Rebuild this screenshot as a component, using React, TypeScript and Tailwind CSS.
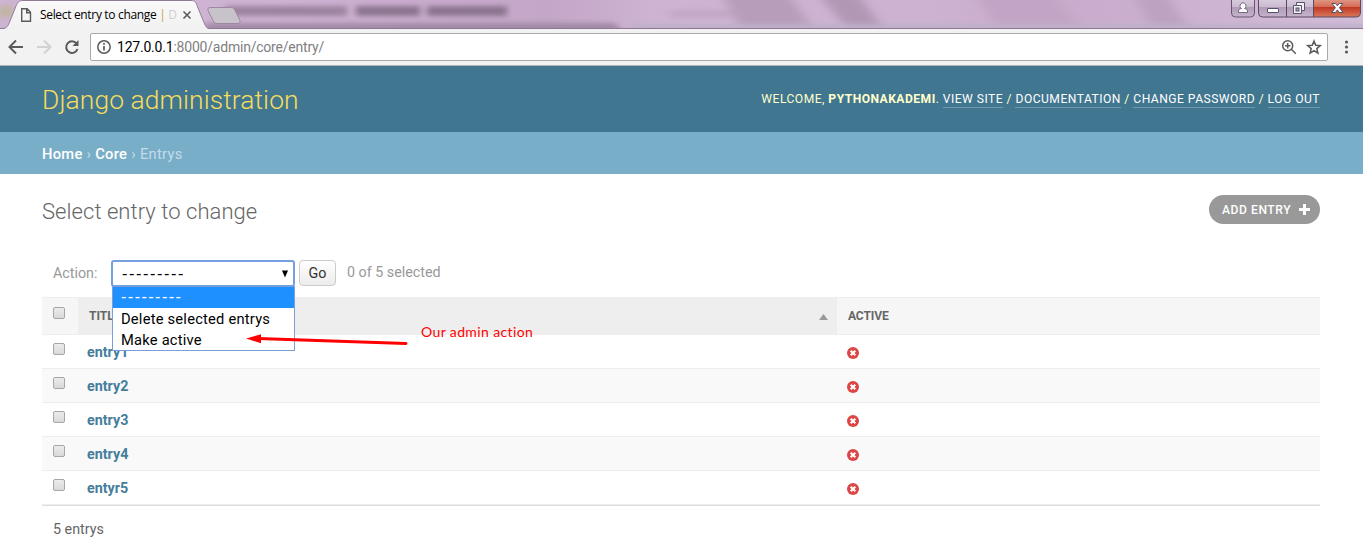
import React from "react";

const entries = ["entry1", "entry2", "entry3", "entry4", "entyr5"];

function TitleBar() {
  return (
    <div className="relative h-[29px] overflow-hidden bg-[#cdb1d1]">
      <svg width="1363" height="29" className="block">
        <defs>
          <linearGradient id="glass" x1="0" x2="1363" y1="0" y2="0" gradientUnits="userSpaceOnUse">
            <stop offset="0" stopColor="#cdb4d2" />
            <stop offset="0.2" stopColor="#cfb3d3" />
            <stop offset="0.4" stopColor="#c4a6c8" />
            <stop offset="0.48" stopColor="#ceb3d2" />
            <stop offset="0.68" stopColor="#ceb2d2" />
            <stop offset="0.78" stopColor="#c9abcd" />
            <stop offset="1" stopColor="#d3bcd8" />
          </linearGradient>
          <linearGradient id="tab" x2="0" y2="1">
            <stop offset="0" stopColor="#fafafa" />
            <stop offset="1" stopColor="#f2f1f2" />
          </linearGradient>
          <linearGradient id="ctl" x2="0" y2="1">
            <stop offset="0" stopColor="#dccfe1" />
            <stop offset="0.48" stopColor="#cbbad0" />
            <stop offset="0.5" stopColor="#b19cb6" />
            <stop offset="1" stopColor="#c7b3cd" />
          </linearGradient>
          <linearGradient id="cls" x2="0" y2="1">
            <stop offset="0" stopColor="#e2a08e" />
            <stop offset="0.48" stopColor="#d46a55" />
            <stop offset="0.5" stopColor="#c13a23" />
            <stop offset="1" stopColor="#d9795c" />
          </linearGradient>
          <filter id="soft" x="-20%" y="-100%" width="140%" height="300%">
            <feGaussianBlur stdDeviation="3 2.5" />
          </filter>
          <filter id="wide" x="-20%" y="-100%" width="140%" height="300%">
            <feGaussianBlur stdDeviation="6 2" />
          </filter>
        </defs>
        <rect width="1363" height="29" fill="url(#glass)" />
        <g filter="url(#wide)">
          <path d="M720-10h65l35 48h-75z" fill="#b79dba" />
          <path d="M815-10h40l35 48h-35z" fill="#b297b5" />
          <path d="M970-10h80l40 48h-85z" fill="#c2a5c6" />
          <path d="M1130-10h32l35 48h-40z" fill="#bda2c2" />
          <path d="M670 10h60v8h-60z" fill="#c3a7c6" />
        </g>
        <g filter="url(#soft)">
          <path d="M0 6h12v11H0z" fill="#c0b59c" />
          <path d="M225 6h122v10H225z" fill="#9c839f" />
          <path d="M356 6h64v10h-64zM427 6h80v10h-80z" fill="#8b748f" />
          <path d="M205 23h410l14 16H205z" fill="#a18aa6" />
          <path d="M629 24h760v15H635z" fill="#beb0ca" />
        </g>
        <path d="M0 28.5H1363" stroke="#8d7794" />
        <path d="M3 29C7 28 8 26 10 21L16 6C18 2 19 .5 23 .5H191c4 0 5 2 6 5l7 17c2 5 3 6 6 6.500z" fill="url(#tab)" />
        <path d="M3 28.500C7 28 8 26 10 21L16 6C18 2 19 .5 23 .5H191c4 0 5 2 6 5l7 17c2 5 3 6 6 6" fill="none" stroke="#917b97" />
        <path d="M210 7.500h22q2 0 3 3l5 10q1 3-2 3h-22q-2 0-3-3l-5-10q-1-3 2-3z" fill="#c8c2ca" stroke="#9e89a4" />
        <path d="M21.700 8.700h5.500l3.300 3.500v9.100h-8.800zM26.700 8.700v4h4" fill="none" stroke="#5a5a5a" strokeWidth="1.400" />
        <path d="M183.500 11.500l7 7m0-7l-7 7" stroke="#5a5a5a" strokeWidth="1.600" />
        <path d="M1231.500-2V13q0 4 4 4h15q4 0 4-4V-2z" fill="url(#ctl)" stroke="#66556c" />
        <path d="M1258.500-2V13q0 4 4 4H1313V-2z" fill="url(#ctl)" />
        <path d="M1313-2V17h43q4 0 4-4V-2z" fill="url(#cls)" />
        <path d="M1258.500-2V13q0 4 4 4h94q4 0 4-4V-2M1286.500 0V17M1313.500 0V17" fill="none" stroke="#5b4b60" />
        <path d="M1238.500 12.500v-1.500q0-2.500 3-2.500a3 3 0 1 1 3 0q3 0 3 2.500v1.500z" fill="#fff" stroke="#74687b" />
        <rect x="1267.500" y="8.500" width="11" height="4" rx="0.500" fill="#fff" stroke="#54536a" />
        <path d="M1296.500 2.500h8v8h-3v3h-8v-8h3z" fill="#f5f3f6" stroke="#54536a" />
        <path d="M1296.500 5.500h5v5" fill="none" stroke="#54536a" />
        <rect x="1296" y="8" width="3" height="3" fill="#b7a4ba" stroke="#54536a" />
        <path d="M1332 3.500h3.500l1.900 2.300 1.900-2.300h3.500l-3.400 4.200 3.600 4.800h-3.700l-1.900-2.600-2 2.600h-3.600l3.600-4.800z" fill="#fff" stroke="#54536a" />
      </svg>
      <div className="absolute left-[40px] top-[6px] whitespace-nowrap font-['Open_Sans',sans-serif] text-[12px] leading-[18px] tracking-[-0.330px] text-black">
        Select entry to change <span className="text-[#c99b4c]">|</span> <span className="text-[#cecece]">D</span>
      </div>
    </div>
  );
}

function Toolbar() {
  return (
    <div className="flex h-[37px] items-center border-b border-[#b3b3b3] bg-[#f2f2f2]">
      <svg width="90" height="36" className="shrink-0" fill="none" stroke="#5a5a5a" strokeWidth="2">
        <path d="M23 18H10M16 11.500L9.500 18l6.500 6.500" />
        <path d="M37 18h13M44 11.500l6.500 6.500-6.500 6.500" stroke="#d2d2d2" />
        <path d="M76.500 14.500A5.800 5.800 0 1 0 77.500 20" />
        <path d="M78.500 11v6h-6z" fill="#5a5a5a" stroke="none" />
      </svg>
      <div className="flex h-7 w-[1238px] items-center rounded-[2px] border border-[#a9a9a9] bg-white">
        <svg width="26" height="26" className="shrink-0" fill="none" stroke="#5a5a5a" strokeWidth="1.500">
          <circle cx="13" cy="13" r="6.200" />
          <path d="M13 12v4.500M13 9v1.700" strokeWidth="1.700" />
        </svg>
        <div className="grow font-['Roboto',sans-serif] text-[14px] leading-[20px] tracking-[-0.210px] text-[#808080]">
          <span className="text-black">127.0.0.1</span>:8000/admin/core/entry/
        </div>
        <svg width="46" height="26" fill="none" stroke="#5a5a5a" strokeWidth="1.500">
          <circle cx="6.700" cy="11.700" r="5" />
          <path d="M10.300 15.300l4.500 4.500M4 11.700h5.400M6.700 9v5.400" />
          <path d="M33 7l1.700 4.200 4.600.400-3.500 3 1.100 4.500-3.900-2.400-3.900 2.400 1.100-4.500-3.500-3 4.600-.400z" strokeWidth="1.500" />
        </svg>
      </div>
      <svg width="34" height="28" className="shrink-0" fill="#5a5a5a">
        <circle cx="18.500" cy="9" r="1.600" />
        <circle cx="18.500" cy="14" r="1.600" />
        <circle cx="18.500" cy="19" r="1.600" />
      </svg>
    </div>
  );
}

function Checkbox() {
  return <div className="h-3 w-3 rounded-[2px] border border-[#a6a6a6] bg-linear-to-b from-[#ececec] to-[#d9d9d9]" />;
}

function FalseIcon() {
  return (
    <svg width="12" height="12" viewBox="0 0 12 12">
      <circle cx="6" cy="6" r="6" fill="#dd4646" />
      <path d="M3.700 3.700l4.600 4.600m0-4.600L3.700 8.300" stroke="#fff" strokeWidth="2.100" />
    </svg>
  );
}

function UserLink({ children }: { children: React.ReactNode }) {
  return <a className="border-b border-[#6f9bb0] pb-px text-white">{children}</a>;
}

function ActionSelect() {
  return (
    <div className="relative ml-[13px] h-[27px] w-[184px]">
      <div className="flex h-[27px] items-center rounded-[3px] border-2 border-[#75a0e0] bg-white pl-[9px] pr-[5px] text-black">
        <span className="grow font-['DejaVu_Sans',sans-serif] text-[15px] leading-[20px] tracking-[1.600px]">---------</span>
        <svg width="6" height="8">
          <path d="M0 0.500h6L3 7.500z" fill="#000" />
        </svg>
      </div>
      <div className="absolute left-px top-[26px] z-10 h-[65px] w-[183px] border border-[#7a9fd6] bg-white text-[14.700px] leading-[22px] tracking-[0.220px] text-black">
        <div className="h-[21px] bg-[#1e90ff] pl-2 font-['DejaVu_Sans',sans-serif] text-[15px] leading-[20px] tracking-[1.400px] text-white">
          ---------
        </div>
        <div className="h-[21px] pl-2">Delete selected entrys</div>
        <div className="h-[21px] pl-2">Make active</div>
      </div>
    </div>
  );
}

export default function App() {
  return (
    <div className="h-[543px] w-[1363px] overflow-hidden bg-white font-['Roboto',sans-serif] text-[14.300px] text-[#666]">
      <TitleBar />
      <Toolbar />
      <header className="flex h-[66px] items-center justify-between bg-[#417690] px-[42px] pr-[43px]">
        <h1 className="pt-[4px] text-[26.400px] font-light tracking-[0.100px] text-[#f5dd5d]">Django administration</h1>
        <div className="whitespace-nowrap text-[12.100px] tracking-[0.475px] text-[#ffc]">
          WELCOME, <b>PYTHONAKADEMI</b>. <UserLink>VIEW SITE</UserLink> / <UserLink>DOCUMENTATION</UserLink> /{" "}
          <UserLink>CHANGE PASSWORD</UserLink> / <UserLink>LOG OUT</UserLink>
        </div>
      </header>
      <nav className="flex h-[42px] items-center bg-[#79aec8] pl-[42px] pt-[3px] text-[14.700px] tracking-[0.300px] text-[#c4dce8]">
        <div>
          <span className="font-medium text-white">Home</span> › <span className="font-medium text-white">Core</span> › Entrys
        </div>
      </nav>
      <main className="relative pl-[42px] pr-[43px]">
        <div className="flex h-[86px] items-start justify-between pt-[21px]">
          <h2 className="pt-[2px] text-[22px] font-light leading-[30px] tracking-[0.060px]">Select entry to change</h2>
          <div className="flex h-[29px] w-[111px] items-center rounded-[15px] bg-[#999] pl-[13px] text-[12.100px] font-medium tracking-[0.550px] text-white">
            <span className="pt-px">ADD ENTRY</span>
            <svg width="11" height="11" className="ml-2">
              <path d="M5.500 0v11M0 5.500h11" stroke="#fff" strokeWidth="3" />
            </svg>
          </div>
        </div>
        <div className="flex h-[37px] items-start pl-[11px] text-[#999]">
          <span className="w-[45px] whitespace-nowrap leading-[27px]">Action:</span>
          <ActionSelect />
          <div className="ml-1 flex h-[26px] w-[37px] items-center justify-center rounded-[4px] border border-[#ccc] bg-linear-to-b from-white to-[#ececec] pt-px text-[#333]">
            Go
          </div>
          <span className="ml-[11px] leading-[25px]">0 of 5 selected</span>
        </div>
        <div className="grid h-[38px] grid-cols-[36px_759px_483px] border-y border-[#eee] bg-[#f6f6f6] text-[12.100px] font-bold">
          <div className="pl-[11px] pt-[9px]">
            <Checkbox />
          </div>
          <div className="flex items-center justify-between bg-[#eee] pl-[11px] pr-[9px]">
            TITLE
            <svg width="9" height="6" className="mt-0.5">
              <path d="M0 6L4.500 0 9 6z" fill="#999" />
            </svg>
          </div>
          <div className="flex items-center pl-[11px] tracking-[-0.150px]">ACTIVE</div>
        </div>
        {entries.map((name, i) => (
          <div
            key={name}
            className={
              "grid h-[34px] grid-cols-[36px_759px_483px] border-b border-[#eee] " + (i % 2 ? "bg-[#f9f9f9]" : "bg-white")
            }
          >
            <div className="pl-[11px] pt-[8px]">
              <Checkbox />
            </div>
            <div className="pl-[9px] pt-[2px] font-bold leading-[31px] text-[#447e9b]">{name}</div>
            <div className="pl-[10px] pt-[12px]">
              <FalseIcon />
            </div>
          </div>
        ))}
        <div className="border-t border-[#ddd] pl-[11px] pt-[13px] leading-[21px]">5 entrys</div>
        <svg width="162" height="16" className="absolute left-[246px] top-[157px] z-20">
          <path d="M12 7.500L160 12.500" stroke="#f00" strokeWidth="3" strokeLinecap="round" />
          <path d="M0 7.500L15 3.300v9z" fill="#f00" />
        </svg>
        <div className="absolute left-[421px] top-[149px] z-20 whitespace-nowrap font-['Lato',sans-serif] text-[14px] leading-[18px] tracking-[0.380px] text-[#f00]">
          Our admin action
        </div>
      </main>
    </div>
  );
}
